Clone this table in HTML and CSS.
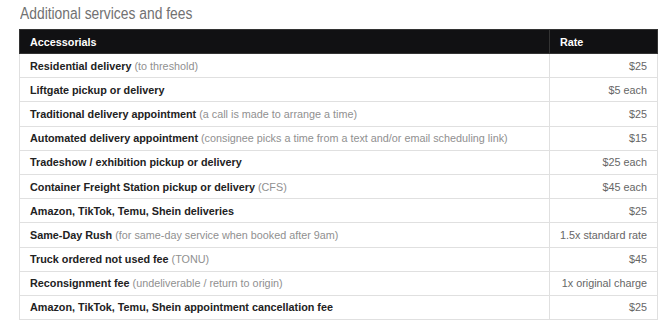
FILE: index.html
```html
<!DOCTYPE html>
<html>
<head>
<meta charset="utf-8">
<link rel="stylesheet" href="styles.css">
</head>
<body>
<div class="wrap">
  <h2 class="title"><span class="title-text">Additional services and fees</span></h2>
  <table class="fees">
    <thead>
      <tr><th class="name">Accessorials</th><th class="rate">Rate</th></tr>
    </thead>
    <tbody>
      <tr><td class="name"><b>Residential delivery</b> <span class="note">(to threshold)</span></td><td class="rate">$25</td></tr>
      <tr><td class="name"><b>Liftgate pickup or delivery</b></td><td class="rate">$5 each</td></tr>
      <tr><td class="name"><b>Traditional delivery appointment</b> <span class="note">(a call is made to arrange a time)</span></td><td class="rate">$25</td></tr>
      <tr><td class="name"><b>Automated delivery appointment</b> <span class="note">(consignee picks a time from a text and/or email scheduling link)</span></td><td class="rate">$15</td></tr>
      <tr><td class="name"><b>Tradeshow / exhibition pickup or delivery</b></td><td class="rate">$25 each</td></tr>
      <tr><td class="name"><b>Container Freight Station pickup or delivery</b> <span class="note">(CFS)</span></td><td class="rate">$45 each</td></tr>
      <tr><td class="name"><b>Amazon, TikTok, Temu, Shein deliveries</b></td><td class="rate">$25</td></tr>
      <tr><td class="name"><b>Same-Day Rush</b> <span class="note">(for same-day service when booked after 9am)</span></td><td class="rate">1.5x standard rate</td></tr>
      <tr><td class="name"><b>Truck ordered not used fee</b> <span class="note">(TONU)</span></td><td class="rate">$45</td></tr>
      <tr><td class="name"><b>Reconsignment fee</b> <span class="note">(undeliverable / return to origin)</span></td><td class="rate">1x original charge</td></tr>
      <tr><td class="name"><b>Amazon, TikTok, Temu, Shein appointment cancellation fee</b></td><td class="rate">$25</td></tr>
    </tbody>
  </table>
</div>
</body>
</html>
```
FILE: styles.css
```css
html, body {
  margin: 0;
  padding: 0;
  background: #fff;
}
body {
  font-family: "Liberation Sans", Arial, sans-serif;
}
.wrap {
  padding: 4px 12px 0 19px;
}
.title {
  margin: 0 0 6px 0;
  font-size: 16px;
  font-weight: normal;
  color: #717171;
  line-height: 19px;
}
.title-text {
  display: inline-block;
  margin-left: 1px;
  transform: scaleX(0.865);
  transform-origin: left center;
}
.fees {
  width: 639px;
  border-collapse: collapse;
  font-size: 10.8px;
}
.fees th {
  background: #111113;
  color: #fff;
  font-weight: bold;
  text-align: left;
  height: 23px;
  padding: 0 10px;
  border: 1px solid #333;
}
.fees td {
  height: 23.2px;
  padding: 0 10px;
  border: 1px solid #e0e0e0;
  color: #222;
  white-space: nowrap;
}
.fees td.rate {
  text-align: right;
  color: #666;
}
.fees th.rate {
  width: 86px;
}
.fees td b {
  color: #222;
}
.note {
  color: #909090;
}
```
